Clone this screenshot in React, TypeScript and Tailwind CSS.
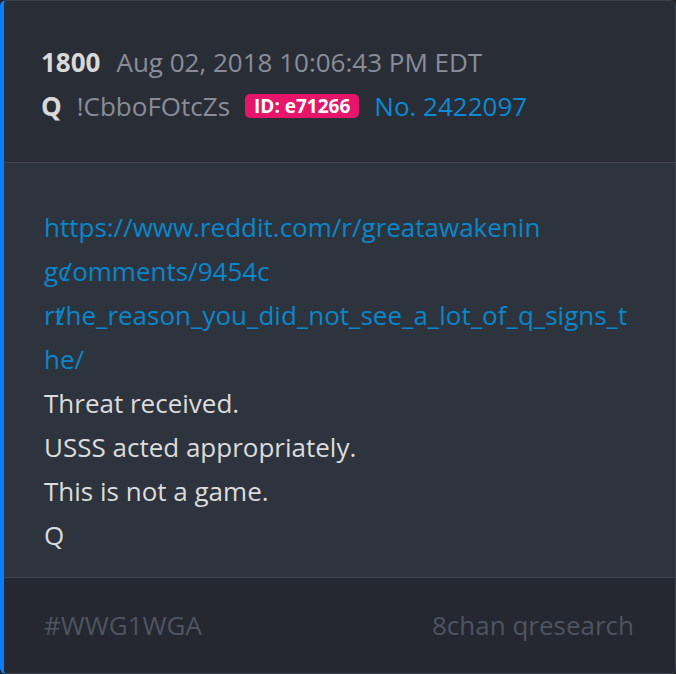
export default function App() {
  return (
    <div className="w-[676px] h-[674px] bg-[#1f2229]" style={{ fontFamily: '"Open Sans", sans-serif' }}>
      <div className="h-full flex flex-col overflow-hidden rounded-md border border-[#3b404b] border-l-4 border-l-[#0a7cff]">
        {/* Header */}
        <div className="bg-[#292d36] pl-[37px] pr-6 pt-[39px] pb-[34px] text-[26px] leading-[44px]">
          <div className="flex items-center gap-[16px]">
            <span className="font-bold text-[#d9d9d9]">1800</span>
            <span className="text-[#8a8d98]">Aug 02, 2018 10:06:43 PM EDT</span>
          </div>
          <div className="flex items-center">
            <span className="font-bold text-[#d9d9d9]">Q</span>
            <span className="ml-[15px] text-[#8a8d98]">!CbboFOtcZs</span>
            <span className="ml-[15px] rounded-[5px] bg-[#e5166a] px-[9px] text-[19px] leading-[24px] font-bold text-white">
              ID: e71266
            </span>
            <span className="ml-[15px] text-[#0a8ad2]">No. 2422097</span>
          </div>
        </div>

        {/* Body */}
        <div className="flex-1 bg-[#2e343e] border-t border-[#404552] pl-[40px] pt-[42px] text-[26px] leading-[44px]">
          <div className="text-[#0a86c9] whitespace-nowrap">
            <div>https://www.reddit.com/r/greatawakenin</div>
            <div>
              gc<span className="-ml-[8px]">/</span>omments/9454c
            </div>
            <div>
              rt<span className="-ml-[8px]">/</span>he_reason_you_did_not_see_a_lot_of_q_signs_t
            </div>
            <div>he/</div>
          </div>
          <div className="text-[#dcdcdc]">
            <p>Threat received.</p>
            <p>USSS acted appropriately.</p>
            <p>This is not a game.</p>
            <p>Q</p>
          </div>
        </div>

        {/* Footer */}
        <div className="h-[96px] shrink-0 bg-[#252830] border-t border-[#404552] pl-[40px] pr-[41px] flex items-center justify-between text-[26px] text-[#4f5461]">
          <span>#WWG1WGA</span>
          <span>8chan qresearch</span>
        </div>
      </div>
    </div>
  );
}
